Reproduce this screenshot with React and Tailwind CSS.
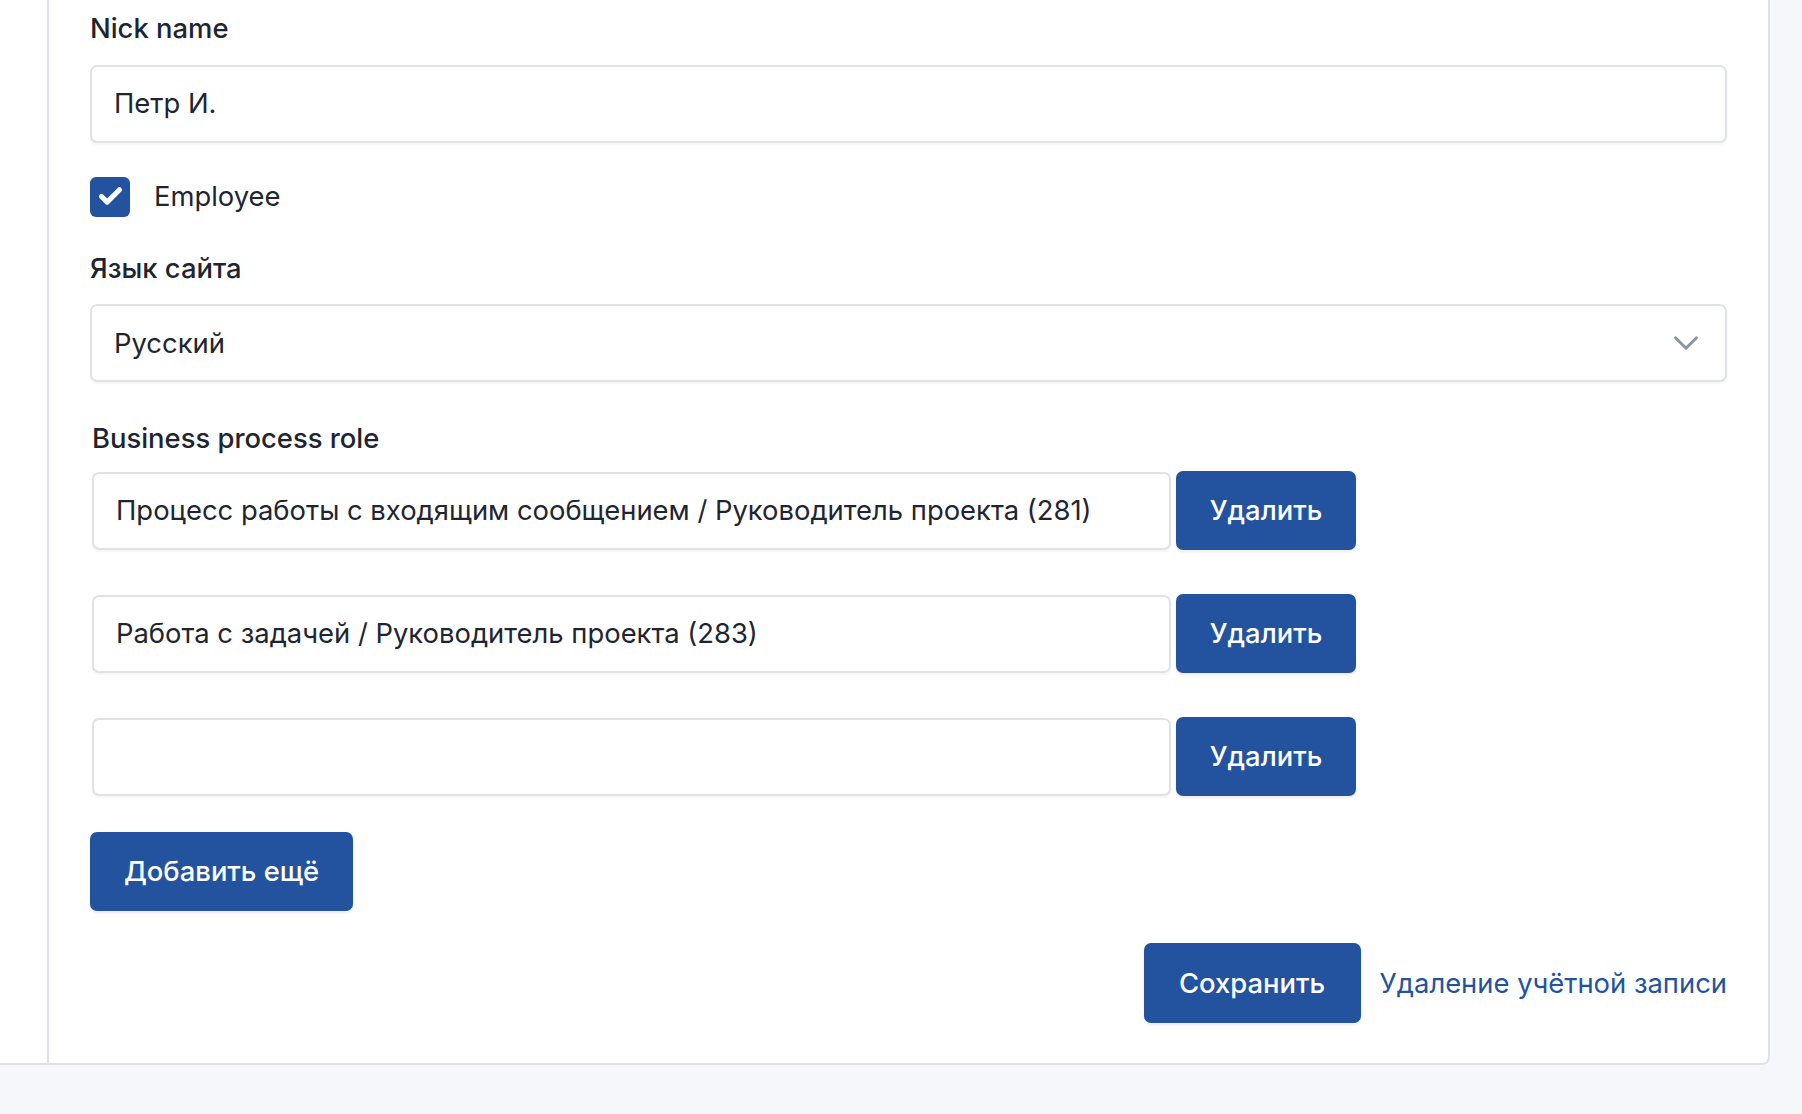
import { ChevronDown, Check } from "lucide-react";

const inputCls =
  "h-[78px] w-full rounded-[7px] border-2 border-[#dfe2e6] bg-white px-[22px] text-[27.4px] text-[#1e2532] shadow-[0_2px_2px_rgba(0,0,0,0.04)] flex items-center";

const btnCls =
  "rounded-[7px] bg-[#23539f] text-white text-[27.4px] font-medium flex items-center justify-center shadow-[0_2px_3px_rgba(0,0,0,0.08)]";

const labelCls = "block text-[27.4px] font-medium leading-[34px] text-[#1e2532]";

function RoleRow({ value }) {
  return (
    <div className="flex items-center gap-[5px] pl-[2px]">
      <div className={inputCls + " !w-[1079px]"}>{value}</div>
      <button className={btnCls + " h-[79px] w-[180px]"}>Удалить</button>
    </div>
  );
}

export default function App() {
  return (
    <div
      className="min-h-[1114px] bg-[#f6f7fb]"
      style={{ fontFamily: "Inter, 'Noto Sans', sans-serif" }}
    >
      <div className="flex w-[1770px] rounded-br-[8px] border-r-2 border-b-2 border-[#dfe1e6] bg-white">
        {/* sidebar edge */}
        <div className="w-[47px] shrink-0" />

        <div className="flex-1 border-l-2 border-[#dfe1e6] px-[41px] pt-[11px] pb-[40px]">
          <label className={labelCls}>Nick name</label>
          <div className={inputCls + " mt-[20px]"}>Петр И.</div>

          <div className="mt-[33px] flex items-center gap-[24px]">
            <span className="flex h-[40px] w-[40px] items-center justify-center rounded-[6px] bg-[#23539f]">
              <Check className="h-[27px] w-[27px] text-white" strokeWidth={4.5} />
            </span>
            <span className="text-[27.4px] text-[#1e2532]">Employee</span>
          </div>

          <label className={labelCls + " mt-[34px]"}>Язык сайта</label>
          <div className={inputCls + " mt-[19px] justify-between !pr-[18px]"}>
            <span>Русский</span>
            <ChevronDown className="h-[42px] w-[42px] text-[#8b95a1]" strokeWidth={1.7} />
          </div>

          <label className={labelCls + " mt-[39px] ml-[2px]"}>Business process role</label>
          <div className="mt-[16px] flex flex-col gap-[44px]">
            <RoleRow value="Процесс работы с входящим сообщением / Руководитель проекта (281)" />
            <RoleRow value="Работа с задачей / Руководитель проекта (283)" />
            <RoleRow value="" />
          </div>

          <button className={btnCls + " mt-[36px] h-[79px] w-[263px]"}>Добавить ещё</button>

          <div className="mt-[32px] flex items-center justify-end gap-[19px]">
            <button className={btnCls + " h-[80px] w-[217px]"}>Сохранить</button>
            <a className="text-[27.4px] text-[#23539f]" href="#">Удаление учётной записи</a>
          </div>
        </div>
      </div>
    </div>
  );
}
